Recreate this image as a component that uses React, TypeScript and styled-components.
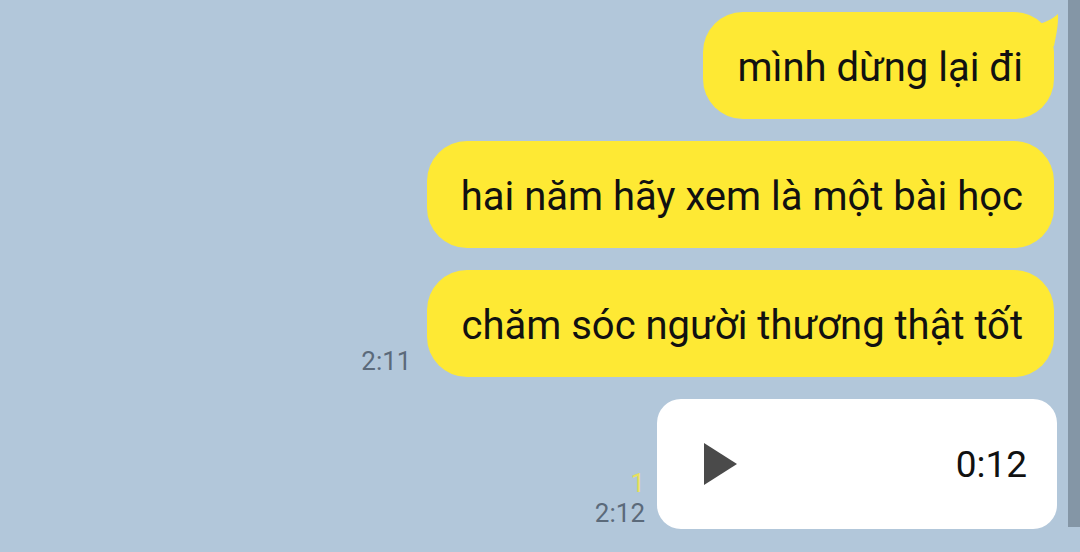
import React from "react";
import styled, { createGlobalStyle } from "styled-components";

const Global = createGlobalStyle`
  html, body { margin: 0; padding: 0; }
  body { background: #b2c7da; font-family: Roboto, "Noto Sans", sans-serif; }
`;

const Screen = styled.div`
  width: 1080px;
  height: 552px;
  display: flex;
  background: #b2c7da;
  overflow: hidden;
`;

const Chat = styled.div`
  flex: 1;
  display: flex;
  flex-direction: column;
  align-items: flex-end;
  gap: 22px;
  padding: 12px 11px 0 0;
`;

const Row = styled.div<{ $gap: number; $pr?: number }>`
  display: flex;
  align-items: flex-end;
  gap: ${(p) => p.$gap}px;
  padding-right: ${(p) => p.$pr ?? 3}px;
`;

const Bubble = styled.div`
  position: relative;
  height: 107px;
  box-sizing: border-box;
  display: flex;
  align-items: center;
  padding: 4px 31px 0 34px;
  background: #fee934;
  border-radius: 40px;
  font-size: 40px;
  color: #111;
  white-space: nowrap;
`;

const Tail = styled.svg`
  position: absolute;
  top: 0;
  right: -5px;
  width: 34px;
  height: 40px;
`;

const Meta = styled.div`
  display: flex;
  flex-direction: column;
  align-items: flex-end;
  font-size: 26px;
  line-height: 30px;
  color: #5b6a7a;
  padding-bottom: 1px;
`;

const Unread = styled.span`
  color: #e8e05c;
  line-height: 30px;
`;

const Audio = styled.div`
  width: 400px;
  height: 130px;
  box-sizing: border-box;
  background: #fff;
  border-radius: 24px;
  display: flex;
  align-items: center;
  justify-content: space-between;
  padding: 0 30px 0 47px;
`;

const Duration = styled.span`
  font-size: 37px;
  color: #111;
`;

const Track = styled.div`
  width: 12px;
  display: flex;
  flex-direction: column;
`;

const Thumb = styled.div`
  height: 527px;
  background: #8496a6;
`;

export default function App() {
  return (
    <>
      <Global />
      <Screen>
        <Chat>
          <Row $gap={0}>
            <Bubble>
              mình dừng lại đi
              <Tail viewBox="0 0 34 40">
                <path d="M8 14 C19 11 28 7 33 2 C33.5 12 31.5 22 29 34 L8 34 Z" fill="#fee934" />
              </Tail>
            </Bubble>
          </Row>
          <Row $gap={0}>
            <Bubble>hai năm hãy xem là một bài học</Bubble>
          </Row>
          <Row $gap={16}>
            <Meta>
              <span>2:11</span>
            </Meta>
            <Bubble>chăm sóc người thương thật tốt</Bubble>
          </Row>
          <Row $gap={12} $pr={0}>
            <Meta>
              <Unread>1</Unread>
              <span>2:12</span>
            </Meta>
            <Audio>
              <svg width="33" height="42" viewBox="0 0 33 42">
                <path d="M0 0 L33 21 L0 42 Z" fill="#4a4a4a" />
              </svg>
              <Duration>0:12</Duration>
            </Audio>
          </Row>
        </Chat>
        <Track>
          <Thumb />
        </Track>
      </Screen>
    </>
  );
}
